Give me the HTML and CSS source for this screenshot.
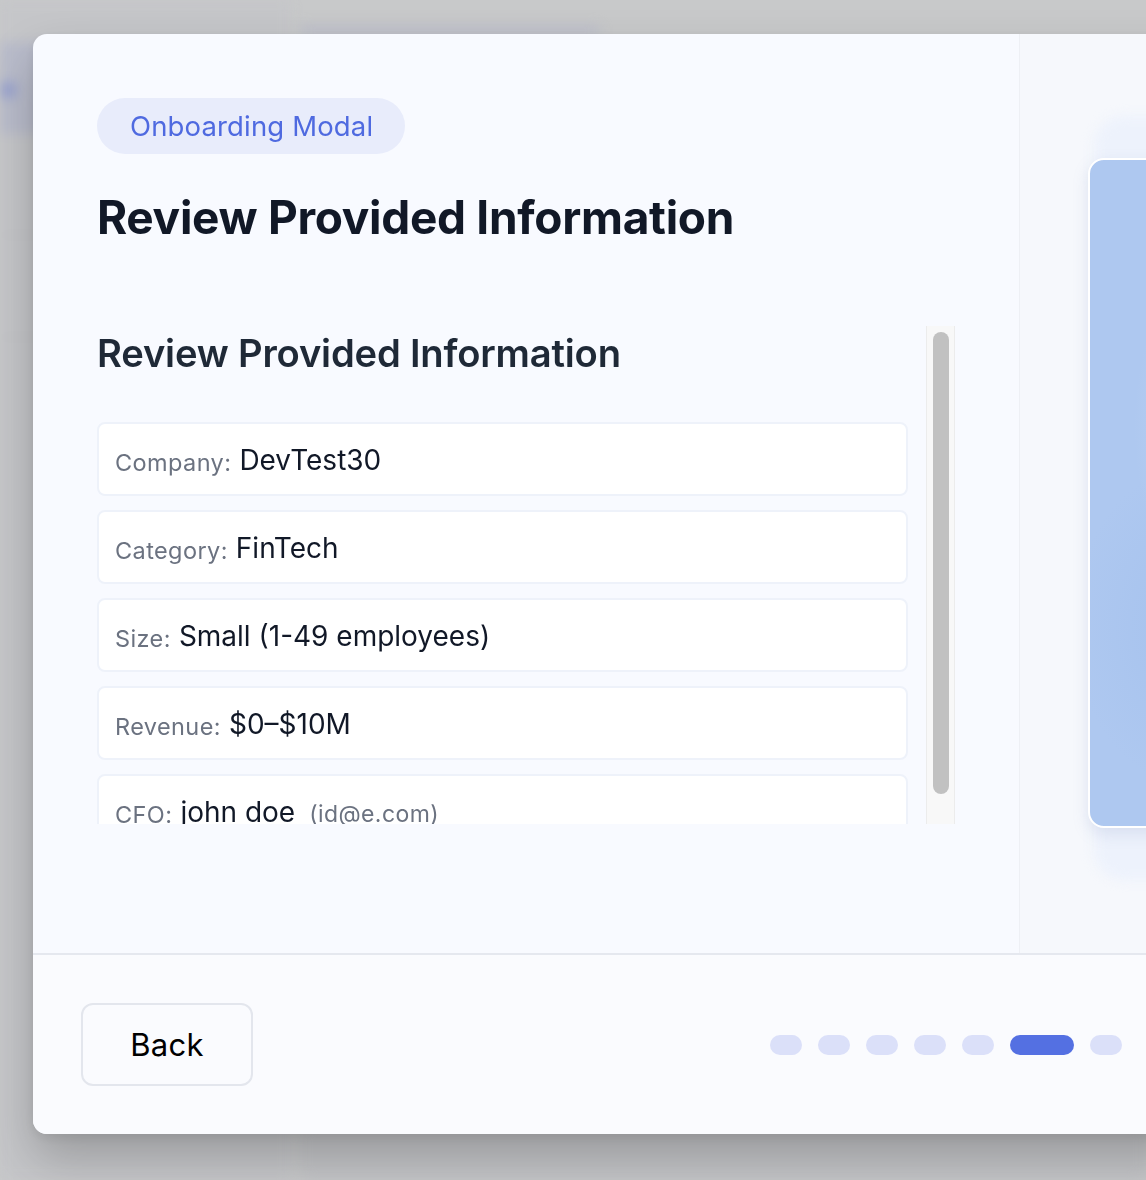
FILE: index.html
```html
<!DOCTYPE html>
<html lang="en">
<head>
<meta charset="utf-8">
<title>Onboarding Modal</title>
<link rel="stylesheet" href="styles.css">
</head>
<body>
<div class="backdrop">
  <aside class="bd-side">
    <div class="bd-brand"><span class="bd-logo">w</span></div>
    <div class="bd-line"></div>
    <div class="bd-line"></div>
  </aside>
  <main class="bd-main">
    <div class="bd-topbar"></div>
    <div class="bd-card"></div>
  </main>
</div>

<div class="overlay">
  <div class="modal">
    <div class="modal-body">
      <section class="left">
        <span class="badge">Onboarding Modal</span>
        <h1 class="title">Review Provided Information</h1>
        <div class="scroll">
          <div class="scroll-content">
            <h2 class="subtitle">Review Provided Information</h2>
            <div class="rows">
              <div class="row"><span class="label">Company:</span><span class="value">DevTest30</span></div>
              <div class="row"><span class="label">Category:</span><span class="value">FinTech</span></div>
              <div class="row"><span class="label">Size:</span><span class="value">Small (1-49 employees)</span></div>
              <div class="row"><span class="label">Revenue:</span><span class="value">$0–$10M</span></div>
              <div class="row"><span class="label">CFO:</span><span class="value">john doe</span><span class="email">(id@e.com)</span></div>
              <div class="row"><span class="label">Country:</span><span class="value">United States</span></div>
            </div>
          </div>
          <div class="scrollbar"><div class="thumb"></div></div>
        </div>
      </section>
      <section class="right">
        <div class="art"></div>
      </section>
    </div>
    <footer class="footer">
      <button class="btn-back">Back</button>
      <div class="dots">
        <span class="dot"></span>
        <span class="dot"></span>
        <span class="dot"></span>
        <span class="dot"></span>
        <span class="dot"></span>
        <span class="dot active"></span>
        <span class="dot"></span>
      </div>
      <button class="btn-next">Next</button>
    </footer>
  </div>
</div>
</body>
</html>
```

FILE: styles.css
```css
* { box-sizing: border-box; }

html, body {
  margin: 0;
  padding: 0;
  width: 1146px;
  height: 1180px;
  overflow: hidden;
  background: #c8c9ca;
  font-family: "Inter", "Noto Sans", sans-serif;
}

/* blurred app behind the overlay */
.backdrop {
  display: flex;
  height: 1180px;
  filter: blur(6px);
}
.bd-side {
  width: 290px;
  padding-top: 42px;
  display: flex;
  flex-direction: column;
  background: #c5c6c9;
}
.bd-brand {
  height: 92px;
  background: #b9bccb;
  padding: 40px 0 0 0;
}
.bd-logo {
  display: block;
  width: 16px;
  height: 16px;
  background: #98a2cf;
  border-radius: 4px;
  font-size: 0;
}
.bd-line {
  height: 2px;
  margin-top: 100px;
  background: #bfc0c3;
}
.bd-main {
  flex: 1;
  padding: 26px 0 0 10px;
  display: flex;
  flex-direction: column;
  gap: 1090px;
}
.bd-topbar {
  width: 300px;
  height: 10px;
  background: #bcbecb;
  border-radius: 4px;
}
.bd-card {
  height: 60px;
  background: #c3c4c7;
  border-radius: 12px;
}

.overlay {
  position: fixed;
  inset: 0;
  padding: 34px 0 0 33px;
}

.modal {
  width: 1333px;
  height: 1100px;
  background: #f8faff;
  border-radius: 14px;
  box-shadow: 0 24px 48px rgba(0, 0, 0, 0.22), 0 4px 12px rgba(0, 0, 0, 0.08);
  display: flex;
  flex-direction: column;
  overflow: hidden;
}

.modal-body {
  height: 919px;
  display: flex;
}

.left {
  width: 987px;
  padding: 64px 64px 0 64px;
  border-right: 1px solid #eef0f5;
  display: flex;
  flex-direction: column;
  align-items: flex-start;
}

.badge {
  display: inline-flex;
  align-items: center;
  height: 56px;
  padding: 0 32px 0 33px;
  border-radius: 28px;
  background: #e8ecfb;
  color: #4f6ae0;
  font-size: 27.5px;
  font-weight: 400;
  letter-spacing: 0.15px;
}

.title {
  margin: 36px 0 0 0;
  font-size: 46px;
  line-height: 1.2;
  font-weight: 700;
  color: #111827;
  letter-spacing: -0.3px;
}

.scroll {
  margin-top: 81px;
  width: 858px;
  height: 498px;
  display: flex;
  gap: 18px;
}

.scroll-content {
  flex: 1;
  overflow: hidden;
  padding-top: 5px;
}

.subtitle {
  margin: 0;
  font-size: 38.2px;
  line-height: 1.2;
  font-weight: 600;
  color: #1f2937;
  letter-spacing: -0.2px;
}

.rows {
  margin-top: 45px;
  display: flex;
  flex-direction: column;
  gap: 14px;
}

.row {
  height: 74px;
  flex-shrink: 0;
  background: #ffffff;
  border: 2px solid #eef2fa;
  border-radius: 8px;
  padding: 6px 17px 0 16px;
  display: flex;
  align-items: center;
  gap: 8px;
}

.label {
  font-size: 23.5px;
  color: #6b7280;
  letter-spacing: 0.4px;
}

.value {
  font-size: 28px;
  color: #111827;
  letter-spacing: 0;
  position: relative;
  top: -2px;
}

.email {
  margin-left: 6px;
  font-size: 23px;
  color: #6b7280;
  letter-spacing: 0.4px;
}

.scrollbar {
  width: 29px;
  flex-shrink: 0;
  background: #f8f8f8;
  border-left: 1px solid #ececec;
  border-right: 1px solid #ececec;
  padding: 6px 5px 30px 6px;
  display: flex;
}
.thumb {
  flex: 1;
  background: #c1c1c1;
  border-radius: 8px;
}

.right {
  position: relative;
  z-index: 0;
  flex: 1;
  background: #f6f8fc;
  padding: 124px 69px 124px 68px;
}

.art {
  position: relative;
  height: 670px;
  border-radius: 16px;
  border: 2px solid #ffffff;
  background:
    radial-gradient(ellipse 120px 200px at 80% 40%, rgba(200, 218, 245, 0.9), rgba(200, 218, 245, 0) 100%),
    radial-gradient(ellipse 120px 160px at 50% 70%, rgba(160, 190, 236, 0.6), rgba(160, 190, 236, 0) 100%),
    #aec8f0;
  box-shadow: 0 6px 16px rgba(120, 140, 190, 0.18);
}
.art::before {
  content: "";
  position: absolute;
  inset: -44px -20px -54px 4px;
  z-index: -1;
  border-radius: 30px;
  background: #edf2fc;
  filter: blur(6px);
}

.footer {
  flex: 1;
  border-top: 2px solid #e5e8ef;
  background: #fafbfe;
  padding: 0 48px;
  display: flex;
  align-items: center;
}

.btn-back {
  width: 172px;
  height: 83px;
  border: 2px solid #e3e6ed;
  border-radius: 12px;
  background: transparent;
  font-family: inherit;
  font-size: 31px;
  color: #000000;
  letter-spacing: 0.3px;
  padding: 0;
}

.dots {
  margin-left: auto;
  display: flex;
  gap: 16px;
  align-items: center;
}
.dot {
  width: 32px;
  height: 20px;
  border-radius: 10px;
  background: #dbe0f9;
}
.dot.active {
  width: 64px;
  background: #5470e2;
}

.btn-next {
  margin-left: 24px;
  width: 172px;
  height: 83px;
  border: none;
  border-radius: 12px;
  background: #5470e2;
  color: #ffffff;
  font-family: inherit;
  font-size: 31px;
}
```
